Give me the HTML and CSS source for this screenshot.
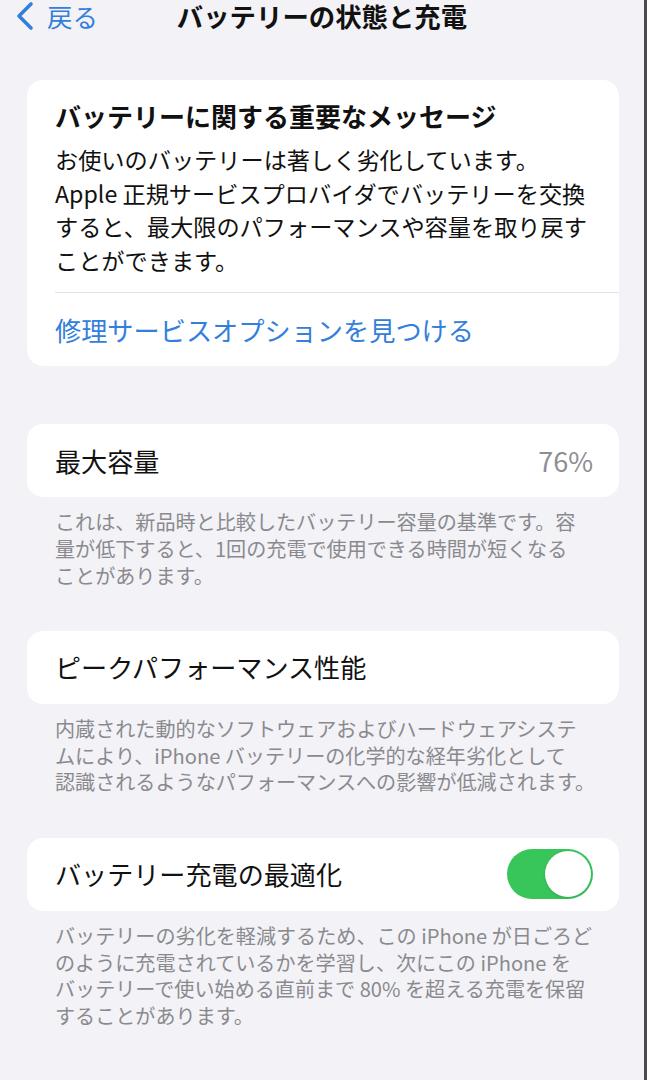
FILE: index.html
```html
<!DOCTYPE html>
<html lang="ja">
<head>
    <meta charset="UTF-8">
    <meta name="viewport" content="width=device-width, initial-scale=1.0">
    <title>バッテリーの状態と充電</title>
    <link rel="stylesheet" href="styles.css">
</head>
<body>
    <div class="screen">
        <div class="nav">
            <a class="back" href="#">
                <svg class="chevron" width="22" height="30" viewBox="0 0 22 30">
                    <path d="M17 3 L5 15 L17 27" fill="none" stroke="currentColor" stroke-width="3.6" stroke-linecap="round" stroke-linejoin="round"/>
                </svg>
                <span>戻る</span>
            </a>
            <h1 class="nav-title">バッテリーの状態と充電</h1>
            <div></div>
        </div>

        <div class="card card-first">
            <div class="message">
                <h2>バッテリーに関する重要なメッセージ</h2>
                <p>お使いのバッテリーは著しく劣化しています。<br>Apple 正規サービスプロバイダでバッテリーを交換<br>すると、最大限のパフォーマンスや容量を取り戻す<br>ことができます。</p>
            </div>
            <a class="card-link" href="#">修理サービスオプションを見つける</a>
        </div>

        <div class="card row">
            <span>最大容量</span>
            <span class="value">76%</span>
        </div>
        <p class="footer">これは、新品時と比較したバッテリー容量の基準です。容<br>量が低下すると、1回の充電で使用できる時間が短くなる<br>ことがあります。</p>

        <div class="card row">
            <span>ピークパフォーマンス性能</span>
        </div>
        <p class="footer">内蔵された動的なソフトウェアおよびハードウェアシステ<br>ムにより、iPhone バッテリーの化学的な経年劣化として<br>認識されるようなパフォーマンスへの影響が低減されます。</p>

        <div class="card row">
            <span>バッテリー充電の最適化</span>
            <div class="toggle on"><div class="knob"></div></div>
        </div>
        <p class="footer">バッテリーの劣化を軽減するため、この iPhone が日ごろど<br>のように充電されているかを学習し、次にこの iPhone を<br>バッテリーで使い始める直前まで 80% を超える充電を保留<br>することがあります。</p>
    </div>
</body>
</html>
```

FILE: styles.css
```css
body {
    margin: 0;
    background: #f2f2f7;
    font-family: "Noto Sans CJK JP", "Noto Sans", sans-serif;
    color: #111;
}

.screen {
    min-height: 1080px;
    border-right: 3px solid #4a4a50;
    overflow: hidden;
}

.nav {
    display: grid;
    grid-template-columns: 1fr auto 1fr;
    align-items: center;
    height: 30px;
}

.back {
    display: flex;
    align-items: center;
    gap: 11px;
    padding-left: 14px;
    color: #3280dc;
    text-decoration: none;
    font-size: 25.5px;
    line-height: 30px;
}

.chevron {
    margin-top: 1px;
}

.nav-title {
    margin: 0;
    font-size: 26.4px;
    line-height: 30px;
    font-weight: 700;
}

.card {
    background: #fff;
    border-radius: 16px;
    margin: 0 25px 0 27px;
}

.card-first {
    margin-top: 50px;
    margin-bottom: 58px;
}

.message {
    padding: 19px 20px 15px 28px;
}

.message h2 {
    margin: 0;
    font-size: 26px;
    line-height: 34px;
    font-weight: 700;
    white-space: nowrap;
}

.message p {
    margin: 10px 0 0;
    font-size: 23.2px;
    line-height: 33.5px;
    white-space: nowrap;
}

.card-link {
    display: flex;
    align-items: center;
    height: 73px;
    margin-left: 28px;
    border-top: 1px solid #e2e2e6;
    color: #3280dc;
    text-decoration: none;
    font-size: 26.2px;
}

.row {
    display: flex;
    align-items: center;
    justify-content: space-between;
    height: 73px;
    padding: 0 26px 0 28px;
    font-size: 26.1px;
}

.value {
    color: #8e8e93;
    font-size: 27px;
}

.footer {
    margin: 12px 20px 41.5px 55px;
    color: #8a8a8e;
    font-size: 20.1px;
    line-height: 26.8px;
    white-space: nowrap;
}

.toggle {
    width: 86px;
    height: 50px;
    border-radius: 25px;
    background: #e5e5ea;
    display: flex;
    align-items: center;
    padding: 2px;
    box-sizing: border-box;
}

.toggle.on {
    background: #38c65a;
    justify-content: flex-end;
}

.knob {
    width: 46px;
    height: 46px;
    border-radius: 50%;
    background: #fff;
    box-shadow: 0 1px 3px rgba(0, 0, 0, 0.15);
}
```
